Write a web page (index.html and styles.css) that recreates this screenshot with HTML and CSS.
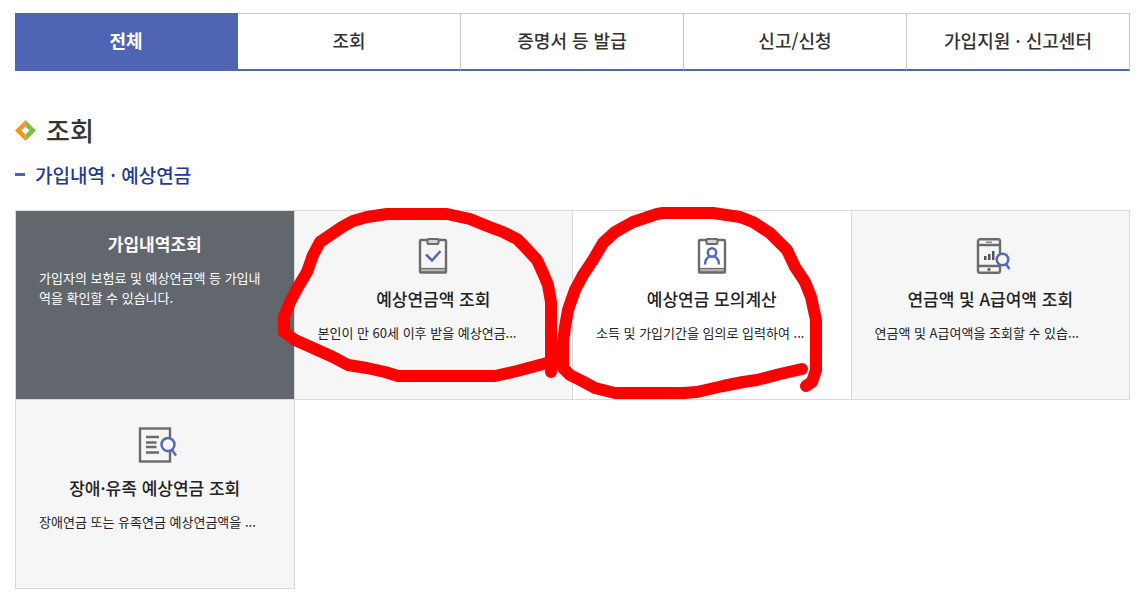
FILE: index.html
```
<!DOCTYPE html>
<html lang="ko">
<head>
  <meta charset="UTF-8">
  <meta name="viewport" content="width=device-width, initial-scale=1.0">
  <title>조회</title>
  <link rel="stylesheet" href="styles.css">
</head>
<body>
  <nav>
    <ul class="tabs">
      <li class="on"><a href="#all">전체</a></li>
      <li><a href="#search">조회</a></li>
      <li><a href="#cert">증명서 등 발급</a></li>
      <li><a href="#report">신고/신청</a></li>
      <li><a href="#center">가입지원 · 신고센터</a></li>
    </ul>
  </nav>

  <main>
    <h2 id="search">
      <svg class="bullet" viewBox="0 0 21 21" aria-hidden="true">
        <path fill="#f7931e" d="M10.500 0L0 10.500L10.500 21V14.500L6.500 10.500L10.500 6.500Z"/>
        <path fill="#7ac143" d="M10.500 0L21 10.500L10.500 21V14.500L14.500 10.500L10.500 6.500Z"/>
      </svg>
      조회
    </h2>
    <h3>가입내역 · 예상연금</h3>

    <div class="board">
      <ul class="cards">
        <li class="active">
          <a href="#history">
            <strong>가입내역조회</strong>
            <p>가입자의 보험료 및 예상연금액 등 가입내역을 확인할 수 있습니다.</p>
          </a>
        </li>
        <li>
          <a href="#expected">
            <svg class="icon" viewBox="0 0 44 36" aria-hidden="true">
              <path fill="#b5b5b5" d="M9 31h26v4H9z"/>
              <rect class="line" x="9" y="2" width="26" height="32.500" rx="1"/>
              <path class="line thin" d="M9 30.500h26"/>
              <rect class="clip" x="16.500" y="1" width="11" height="5" rx="1"/>
              <path class="blue" d="M15 16.500l6 6 8.500-9.500"/>
            </svg>
            <strong>예상연금액 조회</strong>
            <p>본인이 만 60세 이후 받을 예상연금...</p>
          </a>
        </li>
        <li class="white">
          <a href="#simulate">
            <svg class="icon" viewBox="0 0 44 36" aria-hidden="true">
              <path fill="#b5b5b5" d="M9 31h26v4H9z"/>
              <rect class="line" x="9" y="2" width="26" height="32.500" rx="1"/>
              <path class="line thin" d="M9 30.500h26"/>
              <rect class="clip" x="16.500" y="1" width="11" height="5" rx="1"/>
              <circle class="blue" cx="22" cy="14.500" r="4.200"/>
              <path class="blue" d="M15 26.500c0-4.500 2-7 5-8.500M29 26.500c0-4.500-2-7-5-8.500"/>
            </svg>
            <strong>예상연금 모의계산</strong>
            <p>소득 및 가입기간을 임의로 입력하여 ...</p>
          </a>
        </li>
        <li>
          <a href="#amount">
            <svg class="icon" viewBox="0 0 44 36" aria-hidden="true">
              <rect class="line" x="10" y="1.200" width="22" height="33.500" rx="2"/>
              <path class="line" d="M10 7h22M10 28h22"/>
              <path class="line thin" d="M18 4.200h6"/>
              <circle fill="#6b6b6b" cx="21" cy="31.500" r="1.700"/>
              <path fill="#555" d="M16 18h2.500v4H16zM20 16h2.500v6H20zM24 13h2.500v9H24z"/>
              <circle class="blue glass" cx="34.500" cy="21.500" r="5.800"/>
              <path class="blue" d="M38 26l3.500 5"/>
            </svg>
            <strong>연금액 및 A급여액 조회</strong>
            <p>연금액 및 A급여액을 조회할 수 있습...</p>
          </a>
        </li>
        <li>
          <a href="#family">
            <svg class="icon" viewBox="0 0 44 36" aria-hidden="true">
              <rect class="line" x="7" y="1.500" width="30" height="33"/>
              <path class="line" d="M13 10h13M13 15.500h10.500M13 20h10.500M13 25.500h13"/>
              <circle class="blue glass" cx="35" cy="17.500" r="6.500"/>
              <path class="blue" d="M39 23l4 5.500"/>
            </svg>
            <strong>장애·유족 예상연금 조회</strong>
            <p>장애연금 또는 유족연금 예상연금액을 ...</p>
          </a>
        </li>
      </ul>

      <!-- red pen marks drawn over the cards -->
      <svg class="pen" viewBox="15 210 1115 379" aria-hidden="true">
        <path d="M551 372V302L548 285L543 273L537 260L525 247L517 239L503 232L487 226L470 219L447 214H387L367 217L353 221L342 227L320 242L313 255L307 272L298 287L290 302L284 317V332L295 340L313 348L333 357L348 365L367 368L385 372L398 376H495L517 371L547 363"/>
        <path d="M802 369L780 374L757 380L743 382L723 386L697 392L683 393H615L595 388L582 381L570 375L563 368V343L565 327L568 310L575 290L583 275L593 260L603 243L615 232L633 222L657 214L663 213H713L740 217L753 222L770 233L787 250L795 267L805 282L811 297L816 320V370L812 382L806 386"/>
      </svg>
    </div>
  </main>
</body>
</html>
```

FILE: styles.css
```
* { box-sizing: border-box; }
body { margin: 0; padding: 13px 10px 16px 15px; font-family: "Noto Sans CJK KR", sans-serif; color: #333; background: #fff; }
ul { list-style: none; margin: 0; padding: 0; }
a { color: inherit; text-decoration: none; display: block; }

.tabs { display: grid; grid-template-columns: repeat(5, 1fr); }
.tabs li { border-top: 1px solid #c4c8cc; border-right: 1px solid #c4c8cc; border-bottom: 2px solid #4e65b4; }
.tabs a { padding-bottom: 2px; font-size: 18px; font-weight: 500; line-height: 53px; text-align: center; }
.tabs .on { background: #4e65b4; border-color: #4e65b4; color: #fff; }
.tabs .on a { font-weight: bold; }

h2 { display: flex; align-items: center; gap: 10px; margin: 41px 0 0; font-size: 26px; font-weight: 500; line-height: 36px; }
.bullet { width: 21px; height: 21px; }
h3 { display: flex; align-items: center; gap: 10px; margin: 12px 0 21px; font-size: 19px; font-weight: 500; line-height: 29px; color: #1f3a8c; }
h3::before { content: ""; width: 10px; height: 3px; background: #4e65b4; }

.board { position: relative; }
.cards { display: grid; grid-template-columns: repeat(4, 1fr); grid-auto-rows: 189px; padding: 1px 0 0 1px; }
.cards li { margin: -1px 0 0 -1px; border: 1px solid #dadada; background: #f6f6f6; color: #222; }
.cards a { height: 100%; padding: 27px 23px 20px; }
.cards strong { display: block; margin-top: 13px; font-size: 17px; font-weight: 500; line-height: 24px; text-align: center; }
.cards p { margin: 12px 0 0; font-size: 13px; line-height: 20px; }
.cards .white { background: #fff; }
.cards .active { background: #62666d; color: #fff; }
.active a { padding-top: 21px; }
.cards .active strong { margin-top: 0; font-weight: bold; }

.icon { display: block; width: 44px; height: 36px; margin: 0 auto; }
.line { fill: none; stroke: #6b6b6b; stroke-width: 2.4; }
.thin { stroke-width: 1.2; }
.clip { fill: #d4d4d4; stroke: #6b6b6b; stroke-width: 2; }
.blue { fill: none; stroke: #5069b8; stroke-width: 2.5; }
.glass { fill: #f6f6f6; }

.pen { position: absolute; top: 0; left: 0; width: 100%; overflow: visible; pointer-events: none; }
.pen path { fill: none; stroke: #f00; stroke-width: 12; stroke-linecap: round; stroke-linejoin: round; }
```
